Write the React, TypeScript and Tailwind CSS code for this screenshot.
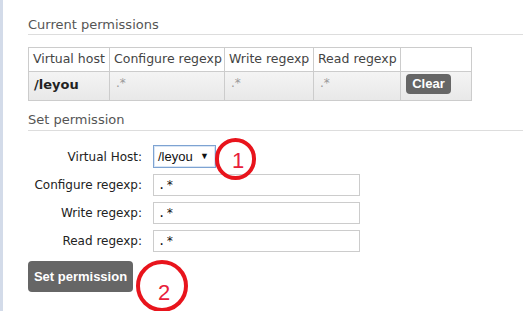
import React from "react";

const font = { fontFamily: '"DejaVu Sans", Verdana, sans-serif' };

function Circle({ n, size, className, numClass }: { n: string; size: string; className: string; numClass: string }) {
  return (
    <div className={`absolute rounded-full border-[4px] border-[#e8141c] ${size} ${className}`}>
      <span className={`absolute text-[22px] leading-none text-[#e8203a] ${numClass}`} style={{ fontFamily: '"Liberation Sans", Arial, sans-serif' }}>
        {n}
      </span>
    </div>
  );
}

export default function App() {
  const rows = [
    { label: "Configure regexp:" },
    { label: "Write regexp:" },
    { label: "Read regexp:" },
  ];
  return (
    <div className="relative flex h-[311px] w-[523px] overflow-hidden bg-white" style={font}>
      <div className="w-[3px] shrink-0 bg-[#d3dbe9]" />
      <div className="flex-1 pl-[25px] pt-[18px] text-[#333]">
        <h3 className="border-b border-[#ddd] pb-[2px] text-[13px] leading-[14px] text-[#555]">Current permissions</h3>
        <table className="mt-[12px] w-[444px] table-fixed border-collapse text-[12.5px] text-[#444]">
          <thead>
            <tr className="h-[24px] bg-white">
              <th className="w-[81px] whitespace-nowrap border border-[#ccc] px-[4px] text-left font-normal">Virtual host</th>
              <th className="w-[115px] whitespace-nowrap border border-[#ccc] px-[4px] text-left font-normal">Configure regexp</th>
              <th className="w-[89px] whitespace-nowrap border border-[#ccc] px-[4px] text-left font-normal">Write regexp</th>
              <th className="w-[87px] whitespace-nowrap border border-[#ccc] px-[4px] text-left font-normal">Read regexp</th>
              <th className="border border-[#ccc]"></th>
            </tr>
          </thead>
          <tbody>
            <tr className="h-[29px] bg-gradient-to-b from-[#f4f4f4] to-[#e8e8e8]">
              <td className="border border-[#ccc] px-[5px] pt-[3px] align-top text-[13px] font-bold text-[#222]">/leyou</td>
              <td className="border border-[#ccc] px-[6px] pt-[2px] align-top text-[12px] text-[#999]">.*</td>
              <td className="border border-[#ccc] px-[6px] pt-[2px] align-top text-[12px] text-[#999]">.*</td>
              <td className="border border-[#ccc] px-[6px] pt-[2px] align-top text-[12px] text-[#999]">.*</td>
              <td className="border border-[#ccc] px-[5px] pt-[2px] pb-[5px] align-top">
                <button className="flex h-[20px] w-[45px] items-center justify-center rounded-[4px] bg-[#666] text-[13px] text-white" style={{ fontFamily: '"Liberation Sans", Arial, sans-serif', fontWeight: 600 }}>
                  Clear
                </button>
              </td>
            </tr>
          </tbody>
        </table>
        <h3 className="mt-[12px] border-b border-[#ddd] pb-[3px] text-[13px] leading-[14px] text-[#555]">Set permission</h3>
        <div className="mt-[14px] flex flex-col gap-[6px] text-[12px] text-[#222]">
          <div className="flex h-[23px] items-center">
            <label className="w-[114px] text-right">Virtual Host:</label>
            <div className="ml-[11px] flex h-[23px] w-[63px] items-center justify-between border border-[#7ea3d2] bg-white pl-[4px] pr-[6px] text-[13px] text-[#111]" style={{ fontFamily: '"Liberation Sans", Arial, sans-serif', boxShadow: "inset 0 0 0 1px #d9e6f5" }}>
              <span>/leyou</span>
              <span className="text-[9px]">▼</span>
            </div>
          </div>
          {rows.map((r) => (
            <div key={r.label} className="flex h-[22px] items-center">
              <label className="w-[114px] text-right">{r.label}</label>
              <input
                readOnly
                value=".*"
                className="ml-[11px] h-[22px] w-[207px] border border-[#ccc] px-[4px] text-[12px] text-[#111] outline-none"
                style={{ fontFamily: '"DejaVu Sans Mono", monospace', letterSpacing: "1px" }}
              />
            </div>
          ))}
        </div>
        <button className="mt-[9px] h-[31px] w-[105px] rounded-[4px] bg-[#666] text-[13px] font-bold text-white" style={{ fontFamily: '"Liberation Sans", Arial, sans-serif' }}>
          Set permission
        </button>
      </div>
      <Circle n="1" size="h-[42px] w-[41px]" className="left-[215px] top-[138px]" numClass="left-[13px] top-[8px]" />
      <Circle n="2" size="h-[52px] w-[52px]" className="left-[136px] top-[260px]" numClass="left-[18px] top-[18px]" />
    </div>
  );
}
